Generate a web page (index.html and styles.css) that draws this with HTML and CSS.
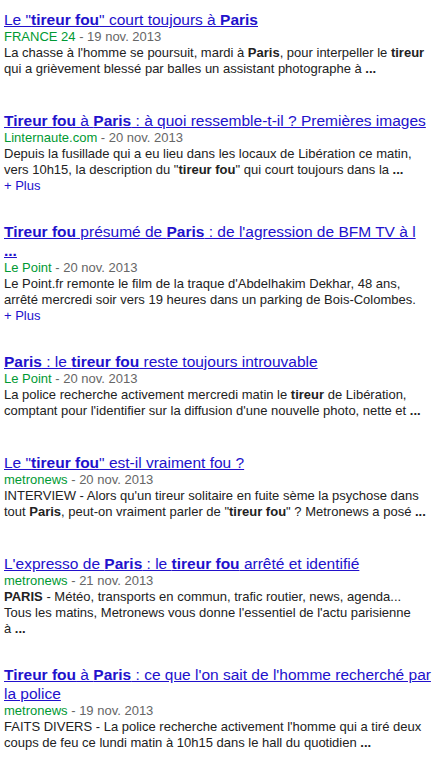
FILE: index.html
```html
<!DOCTYPE html>
<html lang="fr">
<head>
  <meta charset="UTF-8">
  <title>Actualités - tireur fou Paris</title>
  <link rel="stylesheet" href="styles.css">
</head>
<body>
  <div class="results">
    <div class="result">
      <a class="title" href="#">Le "<b>tireur fou</b>" court toujours à <b>Paris</b></a>
      <div class="meta"><span class="src">FRANCE 24</span> - 19 nov. 2013</div>
      <div class="snippet">La chasse à l'homme se poursuit, mardi à <b>Paris</b>, pour interpeller le <b>tireur</b> qui a grièvement blessé par balles un assistant photographe à&nbsp;<b>...</b></div>
    </div>
    <div class="result">
      <a class="title" href="#"><b>Tireur fou</b> à <b>Paris</b> : à quoi ressemble-t-il ? Premières images</a>
      <div class="meta"><span class="src">Linternaute.com</span> - 20 nov. 2013</div>
      <div class="snippet">Depuis la fusillade qui a eu lieu dans les locaux de Libération ce matin, vers 10h15, la description du "<b>tireur fou</b>" qui court toujours dans la&nbsp;<b>...</b></div>
      <a class="more" href="#">+ Plus</a>
    </div>
    <div class="result">
      <a class="title" href="#"><b>Tireur fou</b> présumé de <b>Paris</b> : de l'agression de BFM TV à l<br><b>...</b></a>
      <div class="meta"><span class="src">Le Point</span> - 20 nov. 2013</div>
      <div class="snippet">Le Point.fr remonte le film de la traque d'Abdelhakim Dekhar, 48 ans, arrêté mercredi soir vers 19 heures dans un parking de Bois-Colombes.</div>
      <a class="more" href="#">+ Plus</a>
    </div>
    <div class="result">
      <a class="title" href="#"><b>Paris</b> : le <b>tireur fou</b> reste toujours introuvable</a>
      <div class="meta"><span class="src">Le Point</span> - 20 nov. 2013</div>
      <div class="snippet">La police recherche activement mercredi matin le <b>tireur</b> de Libération, comptant pour l'identifier sur la diffusion d'une nouvelle photo, nette et&nbsp;<b>...</b></div>
    </div>
    <div class="result">
      <a class="title" href="#">Le "<b>tireur fou</b>" est-il vraiment fou ?</a>
      <div class="meta"><span class="src">metronews</span> - 20 nov. 2013</div>
      <div class="snippet">INTERVIEW - Alors qu'un tireur solitaire en fuite sème la psychose dans tout <b>Paris</b>, peut-on vraiment parler de "<b>tireur fou</b>" ? Metronews a posé&nbsp;<b>...</b></div>
    </div>
    <div class="result">
      <a class="title" href="#">L'expresso de <b>Paris</b> : le <b>tireur fou</b> arrêté et identifié</a>
      <div class="meta"><span class="src">metronews</span> - 21 nov. 2013</div>
      <div class="snippet"><b>PARIS</b> - Météo, transports en commun, trafic routier, news, agenda...<br>Tous les matins, Metronews vous donne l'essentiel de l'actu parisienne<br>à&nbsp;<b>...</b></div>
    </div>
    <div class="result">
      <a class="title" href="#"><b>Tireur fou</b> à <b>Paris</b> : ce que l'on sait de l'homme recherché par la police</a>
      <div class="meta"><span class="src">metronews</span> - 19 nov. 2013</div>
      <div class="snippet">FAITS DIVERS - La police recherche activement l'homme qui a tiré deux coups de feu ce lundi matin à 10h15 dans le hall du quotidien&nbsp;<b>...</b></div>
    </div>
  </div>
</body>
</html>
```

FILE: styles.css
```css
/* Résultats actualités */
body { background-color: #fff; color: #222; font-family: "Liberation Sans", Arial, sans-serif; margin: 0; }
.results { width: 432px; padding: 10px 4px 0 4px; }

.result { min-height: 73px; margin-bottom: 28px; }
.result .title { display: block; font-size: 15.5px; line-height: 19px; color: #21c; text-decoration: underline; }
.result .title b { font-weight: bold; }
.result .meta { font-size: 13px; line-height: 16px; color: #666; }
.result .src { color: #093; }
.result .snippet { font-size: 13px; line-height: 16px; color: #222; }
.result .more { display: block; font-size: 13px; line-height: 16px; color: #21c; text-decoration: none; }
```
